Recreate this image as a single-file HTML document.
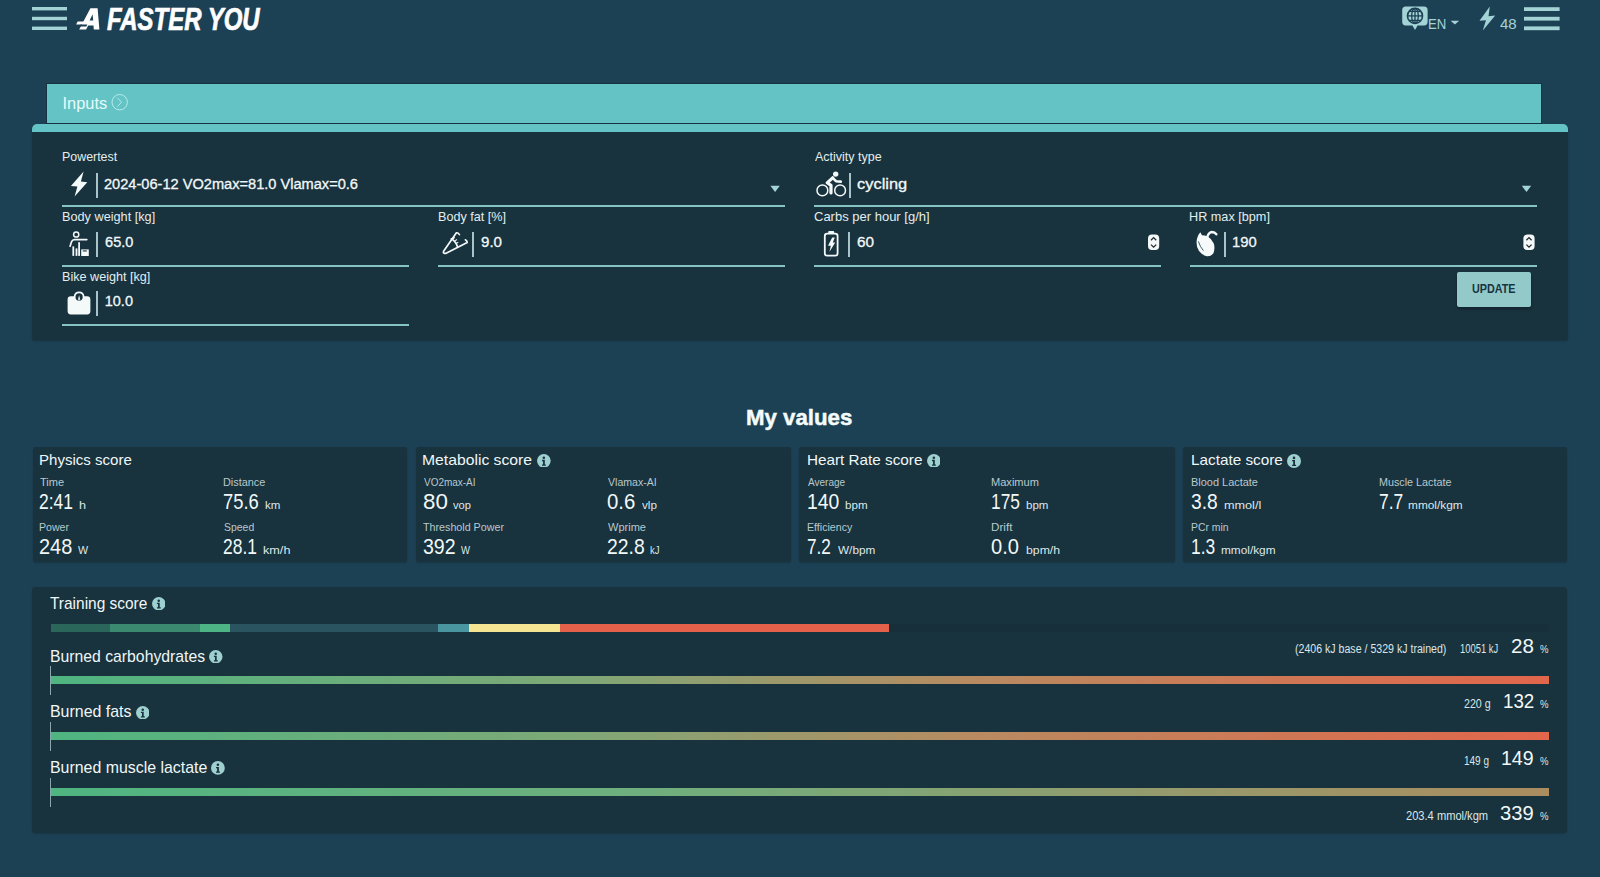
<!DOCTYPE html>
<html><head><meta charset="utf-8"><title>A Faster You</title>
<style>
html,body{margin:0;padding:0;}
body{width:1600px;height:877px;overflow:hidden;position:relative;background:#1d4154;font-family:"Liberation Sans",sans-serif;}
.t{position:absolute;line-height:1;white-space:nowrap;transform-origin:0 0;}
.r{position:absolute;}
</style></head><body>
<svg class="r" style="left:0;top:0" width="1600" height="40" viewBox="0 0 1600 40">
<g fill="#a3d3d5">
<rect x="32" y="7" width="35" height="3.4"/><rect x="32" y="16.8" width="35" height="3.4"/><rect x="32" y="26.6" width="35" height="3.4"/>
<rect x="1524" y="7.2" width="35.6" height="3.8"/><rect x="1524" y="16.8" width="35.6" height="3.8"/><rect x="1524" y="26.4" width="35.6" height="3.8"/>
<path d="M1402.2 10 q0-3.6 3.6-3.6 h18.2 q3.6 0 3.6 3.6 v11.8 q0 3.6-3.6 3.6 h-6.4 l-2.6 4.6 l-2.6-4.6 h-6.6 q-3.6 0-3.6-3.6z"/>
<path d="M1489.8 6.6 L1479.5 20.8 L1486 20.3 L1482.8 30.4 L1495.2 15.6 L1488.5 16.2 Z"/>
<path d="M1450.6 20.8 h8.6 l-4.3 3.6z"/>
</g>
<g fill="none" stroke="#1d4154" stroke-width="1.3">
<circle cx="1415" cy="15.9" r="7.5" stroke-width="1.6"/>
<ellipse cx="1415" cy="15.9" rx="3.3" ry="7.5"/>
<line x1="1415" y1="8.4" x2="1415" y2="23.4"/>
<line x1="1407.5" y1="15.9" x2="1422.5" y2="15.9"/>
<line x1="1409" y1="11.4" x2="1421" y2="11.4"/>
<line x1="1409" y1="20.4" x2="1421" y2="20.4"/>
</g>
</svg>
<div class="t" style="left:1427.74px;top:16.20px;font-size:15.12px;color:#a3d3d5;font-weight:400;transform:scaleX(0.8749);">EN</div>
<div class="t" style="left:1499.70px;top:16.20px;font-size:15.12px;color:#a3d3d5;font-weight:400;transform:scaleX(0.9955);">48</div>
<div class="t" style="left:106.52px;top:4.16px;font-size:30.52px;color:#ffffff;font-weight:700;font-style:italic;transform:scaleX(0.7847);-webkit-text-stroke:0.7px #ffffff;">FASTER YOU</div>
<svg class="r" style="left:0;top:0" width="120" height="40" viewBox="0 0 120 40"><path fill="#ffffff" d="M79.2 29.6 L90.4 8.2 L97.6 8.2 L99.4 29.6 L93.8 29.6 L93.5 25.4 L88.2 25.4 L86.1 29.6 Z M92.6 14.2 L89.6 20.6 L93.2 20.6 Z"/><path fill="#ffffff" d="M77.6 21.4 L91.2 21.4 L90 24.6 L76.2 24.6 Z"/><path fill="#1e3f52" d="M80.6 24.6 L87.4 24.6 L86.4 26.4 L79.8 26.4 Z"/></svg>
<div class="r" style="left:46.00px;top:83.00px;width:1496.00px;height:41.00px;background:#16333f;"></div>
<div class="r" style="left:47.00px;top:84.00px;width:1494.00px;height:39.00px;background:#64c3c5;"></div>
<div class="t" style="left:62.52px;top:94.99px;font-size:16.42px;color:#e4fbfb;font-weight:400;">Inputs</div>
<svg class="r" style="left:110px;top:93px" width="20" height="20" viewBox="0 0 20 20"><circle cx="9.7" cy="9.2" r="7.7" fill="none" stroke="#b6ecec" stroke-width="1"/><path d="M7.4 4.9 L11.6 9.2 L7.4 13.5" fill="none" stroke="#b6ecec" stroke-width="1"/></svg>
<div class="r" style="left:32.00px;top:124.00px;width:1535.60px;height:216.00px;background:#18323e;border-radius:5px 5px 2px 2px;box-shadow:0 1px 2px rgba(0,0,0,0.25);"></div>
<div class="r" style="left:32.00px;top:124.00px;width:1535.60px;height:8.00px;background:#64c3c5;border-radius:5px 5px 0 0;"></div>
<div class="t" style="left:61.76px;top:150.79px;font-size:12.35px;color:#e3eeee;font-weight:400;transform:scaleX(1.0053);">Powertest</div>
<div class="t" style="left:814.60px;top:150.79px;font-size:12.35px;color:#e3eeee;font-weight:400;transform:scaleX(1.0129);">Activity type</div>
<div class="t" style="left:61.68px;top:211.04px;font-size:12.35px;color:#e3eeee;font-weight:400;transform:scaleX(1.0285);">Body weight [kg]</div>
<div class="t" style="left:437.79px;top:211.04px;font-size:12.35px;color:#e3eeee;font-weight:400;transform:scaleX(1.0210);">Body fat [%]</div>
<div class="t" style="left:813.95px;top:211.04px;font-size:12.35px;color:#e3eeee;font-weight:400;transform:scaleX(1.0531);">Carbs per hour [g/h]</div>
<div class="t" style="left:1188.99px;top:211.04px;font-size:12.35px;color:#e3eeee;font-weight:400;transform:scaleX(1.0256);">HR max [bpm]</div>
<div class="t" style="left:61.69px;top:270.54px;font-size:12.35px;color:#e3eeee;font-weight:400;transform:scaleX(1.0221);">Bike weight [kg]</div>
<div class="r" style="left:62.00px;top:205.00px;width:723.00px;height:2.00px;background:#86c3c5;"></div>
<div class="r" style="left:814.00px;top:205.00px;width:723.00px;height:2.00px;background:#86c3c5;"></div>
<div class="r" style="left:62.00px;top:265.00px;width:347.00px;height:2.00px;background:#86c3c5;"></div>
<div class="r" style="left:438.00px;top:265.00px;width:347.00px;height:2.00px;background:#86c3c5;"></div>
<div class="r" style="left:814.00px;top:265.00px;width:347.00px;height:2.00px;background:#86c3c5;"></div>
<div class="r" style="left:1190.00px;top:265.00px;width:347.00px;height:2.00px;background:#86c3c5;"></div>
<div class="r" style="left:62.00px;top:324.00px;width:347.00px;height:2.00px;background:#86c3c5;"></div>
<div class="r" style="left:96.00px;top:172.50px;width:2.00px;height:25.00px;background:#a9c3cb;"></div>
<div class="r" style="left:849.00px;top:172.50px;width:2.00px;height:25.00px;background:#a9c3cb;"></div>
<div class="r" style="left:96.00px;top:232.00px;width:2.00px;height:24.70px;background:#a9c3cb;"></div>
<div class="r" style="left:472.00px;top:232.00px;width:2.00px;height:24.70px;background:#a9c3cb;"></div>
<div class="r" style="left:848.00px;top:232.00px;width:2.00px;height:24.70px;background:#a9c3cb;"></div>
<div class="r" style="left:1224.00px;top:232.00px;width:2.00px;height:24.70px;background:#a9c3cb;"></div>
<div class="r" style="left:96.00px;top:291.30px;width:2.00px;height:24.40px;background:#a9c3cb;"></div>
<div class="t" style="left:104.27px;top:177.09px;font-size:14.53px;color:#f2f8f8;font-weight:400;transform:scaleX(1.0056);-webkit-text-stroke:0.3px #f2f8f8;">2024-06-12 VO2max=81.0 Vlamax=0.6</div>
<div class="t" style="left:857.24px;top:177.09px;font-size:14.53px;color:#f2f8f8;font-weight:400;transform:scaleX(1.1311);-webkit-text-stroke:0.3px #f2f8f8;">cycling</div>
<div class="t" style="left:105.07px;top:235.29px;font-size:14.53px;color:#f2f8f8;font-weight:400;-webkit-text-stroke:0.3px #f2f8f8;">65.0</div>
<div class="t" style="left:480.72px;top:235.19px;font-size:14.53px;color:#f2f8f8;font-weight:400;transform:scaleX(1.0399);-webkit-text-stroke:0.3px #f2f8f8;">9.0</div>
<div class="t" style="left:857.13px;top:235.29px;font-size:14.53px;color:#f2f8f8;font-weight:400;transform:scaleX(1.0538);-webkit-text-stroke:0.3px #f2f8f8;">60</div>
<div class="t" style="left:1232.29px;top:235.29px;font-size:14.53px;color:#f2f8f8;font-weight:400;transform:scaleX(1.0176);-webkit-text-stroke:0.3px #f2f8f8;">190</div>
<div class="t" style="left:104.71px;top:294.29px;font-size:14.53px;color:#f2f8f8;font-weight:400;-webkit-text-stroke:0.3px #f2f8f8;">10.0</div>
<svg class="r" style="left:0;top:0" width="1600" height="340" viewBox="0 0 1600 340">
<g fill="#a3d3d5"><path d="M770.4 185.8 h9.4 l-4.7 6.3z"/><path d="M1521.8 185.8 h9.4 l-4.7 6.3z"/></g>
<g fill="#f4f8f8"><rect x="1148" y="234.6" width="11.2" height="15.4" rx="4"/><rect x="1523.4" y="234.6" width="11.2" height="15.4" rx="4"/></g>
<g fill="none" stroke="#1d2a30" stroke-width="1.3"><path d="M1151 240.2 l2.6-2.6 l2.6 2.6 M1151 244.6 l2.6 2.6 l2.6-2.6"/><path d="M1526.4 240.2 l2.6-2.6 l2.6 2.6 M1526.4 244.6 l2.6 2.6 l2.6-2.6"/></g>
<path fill="#f4f9f9" d="M83.6 171.6 L70.9 185.9 L77.4 186.6 L74.6 196.4 L87.3 182.2 L80.9 181.4 Z"/>
<g fill="none" stroke="#f4f9f9" stroke-width="1.7" stroke-linecap="round">
<circle cx="76.2" cy="234.5" r="2.6" stroke-width="1.5"/>
<path d="M86.8 239.6 H74.6 Q72.5 239.6 71.6 241.6 L70.1 246.2"/>
</g>
<g fill="#f4f9f9"><rect x="72.4" y="246.4" width="1.8" height="9.5"/><rect x="75.6" y="248.4" width="1.8" height="7.5"/><rect x="78.2" y="242.2" width="1.8" height="13.7"/>
<path d="M81.2 249.4 h7.6 v6.6 h-7.6z"/></g>
<rect x="82.8" y="250.4" width="4" height="1.1" fill="#18323e"/>
<path fill="#f4f9f9" d="M70.8 296.2 H73.74 A5.4 5.4 0 0 1 84.46 296.2 H87.2 Q90.4 296.2 90.4 299.4 V311 Q90.4 314.4 87.2 314.4 H70.8 Q67.6 314.4 67.6 311 V299.4 Q67.6 296.2 70.8 296.2Z"/>
<circle cx="79.1" cy="296.9" r="3.6" fill="#18323e"/>
<path fill="#f4f9f9" d="M79.1 295.2 L80.3 299.8 L77.9 299.8 Z"/>
<g fill="none" stroke="#f4f9f9" stroke-width="1.7" stroke-linecap="round" stroke-linejoin="round">
<path d="M459.4 234.6 Q458 232.4 456.4 232.8 L443.6 251.2 Q442.6 253.8 445.6 253.4 L467.2 242.6 Q467.4 241 465.4 239.8"/>
<path d="M451.2 238.8 Q455.8 241.4 457.4 246.6"/>
</g>
<g stroke="#f4f9f9" stroke-width="1.1" stroke-linecap="round"><path d="M453.4 238.6 l1 -1"/><path d="M455.4 240.6 l1.2 -0.8"/><path d="M456.6 243 l1.3 -0.5"/></g>
<g fill="none" stroke="#f4f9f9" stroke-width="1.5"><circle cx="822.4" cy="190.4" r="5.4"/><circle cx="840.1" cy="190.4" r="5.4"/></g>
<circle cx="835.7" cy="174.1" r="2.7" fill="#f4f9f9"/>
<g fill="none" stroke="#f4f9f9" stroke-linecap="round" stroke-linejoin="round"><path d="M832.6 177.8 L827.2 182.8 L831 185.4 L831 193" stroke-width="3.2"/><path d="M832.8 178 L836 181.2 L840.8 181.6" stroke-width="2.6"/></g>
<rect x="824.8" y="233.6" width="12.8" height="22" rx="2.4" fill="none" stroke="#f4f9f9" stroke-width="1.8"/>
<rect x="828.2" y="231" width="6" height="2.6" rx="1" fill="#f4f9f9"/>
<path fill="#f4f9f9" d="M832.2 237.6 L834.8 237.6 L832.8 242.4 L835.2 242.4 L829.4 252 L830.8 245.8 L828 245.8 Z"/>
<path fill="#f6fafa" d="M1200.3 232.2 L1202 235.2 Q1204.8 235.2 1207.8 236.6 Q1211.6 238.8 1213.8 243.6 Q1215.2 248.6 1213.4 253.2 Q1211 256.6 1207 256.2 Q1202.4 255.6 1199 251 Q1196.2 246.8 1196.6 241.6 Q1197 235.8 1200.3 232.2Z"/>
<path fill="none" stroke="#f6fafa" stroke-width="2.3" stroke-linecap="round" d="M1207.2 237.4 Q1208.6 232.2 1212 232 Q1214.8 232 1216.4 234.2"/>
<path fill="none" stroke="#18323e" stroke-width="0.8" d="M1198.4 241.4 Q1200 246.8 1203.4 250.6"/>
</svg>
<div class="r" style="left:1456.50px;top:272.20px;width:74.70px;height:34.70px;background:#93cac9;border-radius:2px;box-shadow:0 2px 3px rgba(0,0,0,0.3);"></div>
<div class="t" style="left:1471.85px;top:282.85px;font-size:12.94px;color:#17343f;font-weight:700;transform:scaleX(0.8339);">UPDATE</div>
<div class="t" style="left:745.85px;top:405.96px;font-size:22.97px;color:#f4fbfb;font-weight:700;transform:scaleX(0.9687);-webkit-text-stroke:0.5px #f4fbfb;">My values</div>
<div class="r" style="left:33.20px;top:446.80px;width:374.10px;height:115.60px;background:#18323e;border-radius:3px;box-shadow:0 1px 2px rgba(0,0,0,0.2);"></div>
<div class="r" style="left:416.00px;top:446.80px;width:375.40px;height:115.60px;background:#18323e;border-radius:3px;box-shadow:0 1px 2px rgba(0,0,0,0.2);"></div>
<div class="r" style="left:799.40px;top:446.80px;width:375.60px;height:115.60px;background:#18323e;border-radius:3px;box-shadow:0 1px 2px rgba(0,0,0,0.2);"></div>
<div class="r" style="left:1183.30px;top:446.80px;width:384.10px;height:115.60px;background:#18323e;border-radius:3px;box-shadow:0 1px 2px rgba(0,0,0,0.2);"></div>
<div class="t" style="left:39.40px;top:452.33px;font-size:15.55px;color:#f0f7f7;font-weight:400;transform:scaleX(0.9677);">Physics score</div>
<div class="t" style="left:39.58px;top:478.09px;font-size:10.17px;color:#b9c9cd;font-weight:400;transform:scaleX(1.0872);">Time</div>
<div class="t" style="left:38.93px;top:491.43px;font-size:21.22px;color:#f2f8f8;font-weight:400;transform:scaleX(0.8227);">2:41</div>
<div class="t" style="left:79.31px;top:500.09px;font-size:11.00px;color:#dde8ea;font-weight:400;transform:scaleX(1.1500);">h</div>
<div class="t" style="left:223.13px;top:478.09px;font-size:10.17px;color:#b9c9cd;font-weight:400;transform:scaleX(1.0703);">Distance</div>
<div class="t" style="left:223.08px;top:491.43px;font-size:21.22px;color:#f2f8f8;font-weight:400;transform:scaleX(0.8663);">75.6</div>
<div class="t" style="left:265.15px;top:500.09px;font-size:11.00px;color:#dde8ea;font-weight:400;transform:scaleX(1.0449);">km</div>
<div class="t" style="left:38.95px;top:522.99px;font-size:10.17px;color:#b9c9cd;font-weight:400;transform:scaleX(1.0386);">Power</div>
<div class="t" style="left:38.80px;top:536.23px;font-size:21.22px;color:#f2f8f8;font-weight:400;transform:scaleX(0.9395);">248</div>
<div class="t" style="left:77.95px;top:544.85px;font-size:11.05px;color:#dde8ea;font-weight:400;transform:scaleX(0.9682);">W</div>
<div class="t" style="left:223.53px;top:522.99px;font-size:10.17px;color:#b9c9cd;font-weight:400;transform:scaleX(1.0288);">Speed</div>
<div class="t" style="left:223.13px;top:536.23px;font-size:21.22px;color:#f2f8f8;font-weight:400;transform:scaleX(0.8215);">28.1</div>
<div class="t" style="left:262.93px;top:544.89px;font-size:11.00px;color:#dde8ea;font-weight:400;transform:scaleX(1.1500);">km/h</div>
<div class="t" style="left:422.44px;top:452.33px;font-size:15.55px;color:#f0f7f7;font-weight:400;transform:scaleX(1.0105);">Metabolic score</div>
<svg class="r" style="left:537.20px;top:453.60px" width="13.70" height="13.70" viewBox="0 0 14 14"><circle cx="7" cy="7" r="7" fill="#9fd0d0"/><circle cx="7" cy="3.9" r="1.3" fill="#18323e"/><path d="M5.1 6 h2.9 v4.7 h1.1 v1.3 h-4 v-1.3 h1.1 v-3.4 h-1.1z" fill="#18323e"/></svg>
<div class="t" style="left:423.65px;top:478.09px;font-size:10.17px;color:#b9c9cd;font-weight:400;transform:scaleX(0.9809);">VO2max-AI</div>
<div class="t" style="left:422.70px;top:491.43px;font-size:21.22px;color:#f2f8f8;font-weight:400;transform:scaleX(1.0523);">80</div>
<div class="t" style="left:453.44px;top:500.09px;font-size:11.00px;color:#dde8ea;font-weight:400;transform:scaleX(1.0107);">vop</div>
<div class="t" style="left:607.65px;top:478.09px;font-size:10.17px;color:#b9c9cd;font-weight:400;transform:scaleX(1.0384);">Vlamax-AI</div>
<div class="t" style="left:606.88px;top:491.43px;font-size:21.22px;color:#f2f8f8;font-weight:400;transform:scaleX(0.9605);">0.6</div>
<div class="t" style="left:641.54px;top:500.09px;font-size:11.00px;color:#dde8ea;font-weight:400;transform:scaleX(1.0643);">vlp</div>
<div class="t" style="left:423.49px;top:522.99px;font-size:10.17px;color:#b9c9cd;font-weight:400;transform:scaleX(1.0547);">Threshold Power</div>
<div class="t" style="left:422.92px;top:536.23px;font-size:21.22px;color:#f2f8f8;font-weight:400;transform:scaleX(0.9215);">392</div>
<div class="t" style="left:461.25px;top:544.85px;font-size:11.05px;color:#dde8ea;font-weight:400;transform:scaleX(0.8617);">W</div>
<div class="t" style="left:607.64px;top:522.99px;font-size:10.17px;color:#b9c9cd;font-weight:400;transform:scaleX(1.0856);">Wprime</div>
<div class="t" style="left:606.73px;top:536.23px;font-size:21.22px;color:#f2f8f8;font-weight:400;transform:scaleX(0.9120);">22.8</div>
<div class="t" style="left:650.18px;top:544.89px;font-size:11.00px;color:#dde8ea;font-weight:400;transform:scaleX(0.8668);">kJ</div>
<div class="t" style="left:806.98px;top:452.33px;font-size:15.55px;color:#f0f7f7;font-weight:400;transform:scaleX(0.9820);">Heart Rate score</div>
<svg class="r" style="left:926.50px;top:453.60px" width="13.70" height="13.70" viewBox="0 0 14 14"><circle cx="7" cy="7" r="7" fill="#9fd0d0"/><circle cx="7" cy="3.9" r="1.3" fill="#18323e"/><path d="M5.1 6 h2.9 v4.7 h1.1 v1.3 h-4 v-1.3 h1.1 v-3.4 h-1.1z" fill="#18323e"/></svg>
<div class="t" style="left:808.20px;top:478.09px;font-size:10.17px;color:#b9c9cd;font-weight:400;transform:scaleX(0.9855);">Average</div>
<div class="t" style="left:806.75px;top:491.43px;font-size:21.22px;color:#f2f8f8;font-weight:400;transform:scaleX(0.9122);">140</div>
<div class="t" style="left:845.44px;top:500.09px;font-size:11.00px;color:#dde8ea;font-weight:400;transform:scaleX(1.0568);">bpm</div>
<div class="t" style="left:991.11px;top:478.09px;font-size:10.17px;color:#b9c9cd;font-weight:400;transform:scaleX(1.0884);">Maximum</div>
<div class="t" style="left:990.70px;top:491.43px;font-size:21.22px;color:#f2f8f8;font-weight:400;transform:scaleX(0.8178);">175</div>
<div class="t" style="left:1026.15px;top:500.09px;font-size:11.00px;color:#dde8ea;font-weight:400;transform:scaleX(1.0468);">bpm</div>
<div class="t" style="left:807.35px;top:522.99px;font-size:10.17px;color:#b9c9cd;font-weight:400;transform:scaleX(1.0463);">Efficiency</div>
<div class="t" style="left:807.34px;top:536.23px;font-size:21.22px;color:#f2f8f8;font-weight:400;transform:scaleX(0.8110);">7.2</div>
<div class="t" style="left:837.54px;top:544.85px;font-size:11.05px;color:#dde8ea;font-weight:400;transform:scaleX(1.0659);">W/bpm</div>
<div class="t" style="left:991.06px;top:522.99px;font-size:10.17px;color:#b9c9cd;font-weight:400;transform:scaleX(1.1500);">Drift</div>
<div class="t" style="left:991.20px;top:536.23px;font-size:21.22px;color:#f2f8f8;font-weight:400;transform:scaleX(0.9460);">0.0</div>
<div class="t" style="left:1025.80px;top:544.89px;font-size:11.00px;color:#dde8ea;font-weight:400;transform:scaleX(1.1149);">bpm/h</div>
<div class="t" style="left:1190.78px;top:452.33px;font-size:15.55px;color:#f0f7f7;font-weight:400;transform:scaleX(0.9839);">Lactate score</div>
<svg class="r" style="left:1286.70px;top:453.60px" width="14.00" height="14.00" viewBox="0 0 14 14"><circle cx="7" cy="7" r="7" fill="#9fd0d0"/><circle cx="7" cy="3.9" r="1.3" fill="#18323e"/><path d="M5.1 6 h2.9 v4.7 h1.1 v1.3 h-4 v-1.3 h1.1 v-3.4 h-1.1z" fill="#18323e"/></svg>
<div class="t" style="left:1191.12px;top:478.09px;font-size:10.17px;color:#b9c9cd;font-weight:400;transform:scaleX(1.0780);">Blood Lactate</div>
<div class="t" style="left:1191.23px;top:491.43px;font-size:21.22px;color:#f2f8f8;font-weight:400;transform:scaleX(0.9065);">3.8</div>
<div class="t" style="left:1223.68px;top:500.09px;font-size:11.00px;color:#dde8ea;font-weight:400;transform:scaleX(1.1500);">mmol/l</div>
<div class="t" style="left:1378.84px;top:478.09px;font-size:10.17px;color:#b9c9cd;font-weight:400;transform:scaleX(1.0603);">Muscle Lactate</div>
<div class="t" style="left:1378.83px;top:491.43px;font-size:21.22px;color:#f2f8f8;font-weight:400;transform:scaleX(0.8219);">7.7</div>
<div class="t" style="left:1408.23px;top:500.09px;font-size:11.00px;color:#dde8ea;font-weight:400;transform:scaleX(1.0783);">mmol/kgm</div>
<div class="t" style="left:1191.16px;top:522.99px;font-size:10.17px;color:#b9c9cd;font-weight:400;transform:scaleX(1.0268);">PCr min</div>
<div class="t" style="left:1190.69px;top:536.23px;font-size:21.22px;color:#f2f8f8;font-weight:400;transform:scaleX(0.8205);">1.3</div>
<div class="t" style="left:1220.93px;top:544.89px;font-size:11.00px;color:#dde8ea;font-weight:400;transform:scaleX(1.0743);">mmol/kgm</div>
<div class="r" style="left:31.70px;top:587.30px;width:1535.70px;height:246.20px;background:#18323e;border-radius:4px;box-shadow:0 1px 2px rgba(0,0,0,0.2);"></div>
<div class="t" style="left:50.49px;top:595.71px;font-size:15.70px;color:#f0f7f7;font-weight:400;transform:scaleX(0.9849);">Training score</div>
<svg class="r" style="left:151.70px;top:596.80px" width="13.50" height="13.50" viewBox="0 0 14 14"><circle cx="7" cy="7" r="7" fill="#9fd0d0"/><circle cx="7" cy="3.9" r="1.3" fill="#18323e"/><path d="M5.1 6 h2.9 v4.7 h1.1 v1.3 h-4 v-1.3 h1.1 v-3.4 h-1.1z" fill="#18323e"/></svg>
<div class="r" style="left:50.80px;top:624.00px;width:1497.80px;height:8.00px;background:#172f3b;"></div>
<div class="r" style="left:50.80px;top:624.00px;width:59.00px;height:8.00px;background:#2a6659;"></div>
<div class="r" style="left:109.80px;top:624.00px;width:90.00px;height:8.00px;background:#3b8a6f;"></div>
<div class="r" style="left:199.80px;top:624.00px;width:30.40px;height:8.00px;background:#4db585;"></div>
<div class="r" style="left:230.20px;top:624.00px;width:207.80px;height:8.00px;background:#2b5461;"></div>
<div class="r" style="left:438.00px;top:624.00px;width:31.00px;height:8.00px;background:#4a96a0;"></div>
<div class="r" style="left:469.00px;top:624.00px;width:90.50px;height:8.00px;background:#f4e592;"></div>
<div class="r" style="left:559.50px;top:624.00px;width:329.90px;height:8.00px;background:#e6614a;"></div>
<div class="t" style="left:49.54px;top:648.51px;font-size:15.70px;color:#f0f7f7;font-weight:400;transform:scaleX(1.0048);">Burned carbohydrates</div>
<svg class="r" style="left:209.20px;top:649.80px" width="13.50" height="13.50" viewBox="0 0 14 14"><circle cx="7" cy="7" r="7" fill="#9fd0d0"/><circle cx="7" cy="3.9" r="1.3" fill="#18323e"/><path d="M5.1 6 h2.9 v4.7 h1.1 v1.3 h-4 v-1.3 h1.1 v-3.4 h-1.1z" fill="#18323e"/></svg>
<div class="r" style="left:50.00px;top:666.40px;width:1.20px;height:29.00px;background:#8aa5ad;"></div>
<div class="r" style="left:51.00px;top:676.40px;width:1497.60px;height:8.00px;background:linear-gradient(90deg,#4fb581 0%,#7ea877 35%,#b98a60 62%,#e2664b 100%);"></div>
<div class="t" style="left:49.52px;top:704.21px;font-size:15.70px;color:#f0f7f7;font-weight:400;transform:scaleX(1.0154);">Burned fats</div>
<svg class="r" style="left:135.70px;top:705.50px" width="13.50" height="13.50" viewBox="0 0 14 14"><circle cx="7" cy="7" r="7" fill="#9fd0d0"/><circle cx="7" cy="3.9" r="1.3" fill="#18323e"/><path d="M5.1 6 h2.9 v4.7 h1.1 v1.3 h-4 v-1.3 h1.1 v-3.4 h-1.1z" fill="#18323e"/></svg>
<div class="r" style="left:50.00px;top:722.20px;width:1.20px;height:29.00px;background:#8aa5ad;"></div>
<div class="r" style="left:51.00px;top:732.20px;width:1497.60px;height:8.00px;background:linear-gradient(90deg,#4fb581 0%,#7ea877 35%,#b98a60 62%,#e2664b 100%);"></div>
<div class="t" style="left:49.53px;top:759.81px;font-size:15.70px;color:#f0f7f7;font-weight:400;transform:scaleX(1.0136);">Burned muscle lactate</div>
<svg class="r" style="left:210.90px;top:761.10px" width="13.80" height="13.80" viewBox="0 0 14 14"><circle cx="7" cy="7" r="7" fill="#9fd0d0"/><circle cx="7" cy="3.9" r="1.3" fill="#18323e"/><path d="M5.1 6 h2.9 v4.7 h1.1 v1.3 h-4 v-1.3 h1.1 v-3.4 h-1.1z" fill="#18323e"/></svg>
<div class="r" style="left:50.00px;top:778.10px;width:1.20px;height:29.00px;background:#8aa5ad;"></div>
<div class="r" style="left:51.00px;top:788.10px;width:1497.60px;height:8.00px;background:linear-gradient(90deg,#4fb581 0%,#6faf7d 40%,#969a6c 75%,#aa8c5f 100%);"></div>
<div class="t" style="left:1539.56px;top:644.64px;font-size:10.17px;color:#dbe6e8;font-weight:400;transform:scaleX(0.9409);">%</div>
<div class="t" style="left:1510.87px;top:635.52px;font-size:20.35px;color:#f2f8f8;font-weight:400;transform:scaleX(1.0118);">28</div>
<div class="t" style="left:1295.46px;top:642.64px;font-size:12.65px;color:#dbe6e8;font-weight:400;transform:scaleX(0.8383);">(2406 kJ base / 5329 kJ trained)</div>
<div class="t" style="left:1459.55px;top:642.64px;font-size:12.65px;color:#dbe6e8;font-weight:400;transform:scaleX(0.7433);">10051 kJ</div>
<div class="t" style="left:1539.56px;top:700.29px;font-size:10.17px;color:#dbe6e8;font-weight:400;transform:scaleX(0.9409);">%</div>
<div class="t" style="left:1502.59px;top:691.17px;font-size:20.35px;color:#f2f8f8;font-weight:400;transform:scaleX(0.9222);">132</div>
<div class="t" style="left:1464.07px;top:698.29px;font-size:12.65px;color:#dbe6e8;font-weight:400;transform:scaleX(0.8422);">220 g</div>
<div class="t" style="left:1539.56px;top:756.89px;font-size:10.17px;color:#dbe6e8;font-weight:400;transform:scaleX(0.9409);">%</div>
<div class="t" style="left:1501.23px;top:747.77px;font-size:20.35px;color:#f2f8f8;font-weight:400;transform:scaleX(0.9606);">149</div>
<div class="t" style="left:1463.65px;top:754.89px;font-size:12.65px;color:#dbe6e8;font-weight:400;transform:scaleX(0.7908);">149 g</div>
<div class="t" style="left:1539.56px;top:811.89px;font-size:10.17px;color:#dbe6e8;font-weight:400;transform:scaleX(0.9409);">%</div>
<div class="t" style="left:1500.19px;top:802.77px;font-size:20.35px;color:#f2f8f8;font-weight:400;transform:scaleX(0.9922);">339</div>
<div class="t" style="left:1406.04px;top:809.89px;font-size:12.65px;color:#dbe6e8;font-weight:400;transform:scaleX(0.8788);">203.4 mmol/kgm</div>
</body></html>
